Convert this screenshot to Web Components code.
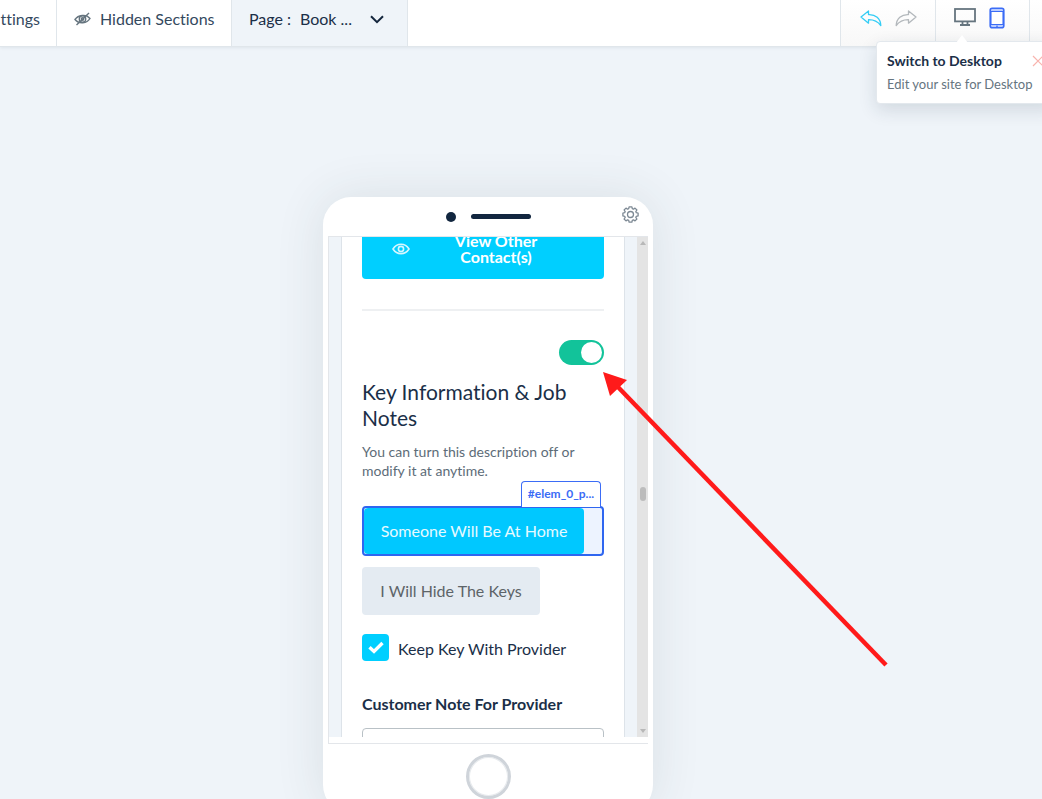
<!DOCTYPE html>
<html lang="en">
<head>
<meta charset="utf-8">
<title>Site editor</title>
<style>
  html, body { margin: 0; height: 100%; }
  body { font: 16px/20px Lato, "Open Sans", sans-serif; font-variant-ligatures: none; color: #1b2f48; background: #eff4f9; overflow: hidden; }
</style>
</head>
<body>
<site-editor></site-editor>

<template id="site-editor">
  <style>
    :host { display: flex; flex-direction: column; min-height: 100%; position: relative; }
    .stage { flex: 1; display: flex; justify-content: center; padding: 150px 66px 0 0; }
  </style>
  <tool-bar></tool-bar>
  <main class="stage">
    <phone-frame><booking-form></booking-form></phone-frame>
  </main>
  <callout-arrow></callout-arrow>
</template>

<template id="tool-bar">
  <style>
    :host { display: flex; height: 46px; background: #fff; border-bottom: 1px solid #e0e6eb; box-shadow: 0 1px 3px #1b2f4814; position: relative; z-index: 1; }
    nav, .tools { display: flex; }
    .tools { margin-left: auto; background: linear-gradient(#fff, #f8f8f8); }
    a, .page, .group { box-sizing: border-box; display: flex; align-items: center; padding-bottom: 8px; border-right: 1px solid #e0e6eb; white-space: nowrap; }
    a { color: #34495e; text-decoration: none; }
    .settings { width: 57px; justify-content: flex-end; padding-right: 16px; }
    .hidden { gap: 9px; width: 175px; padding-left: 17px; }
    .page { width: 176px; padding-left: 17px; background: #eff4f9; }
    .page label { width: 51px; }
    select { appearance: none; border: 0; background: none; font: inherit; color: inherit; padding: 0; margin: 0; width: 90px; }
    .page svg { margin-left: -20px; pointer-events: none; }
    button { border: 0; background: none; padding: 0; display: flex; }
    .group { border-right: 0; border-left: 1px solid #e0e6eb; }
    .history { width: 95px; gap: 13px; padding: 0 0 10px 19px; }
    .device { width: 94px; gap: 13px; padding: 0 0 10px 18px; position: relative; }
    .rest { width: 13px; }
    hint-popover { position: absolute; top: 41px; left: -60px; }
  </style>
  <nav>
    <a class="settings" href="#settings" aria-label="Settings">ttings</a>
    <a class="hidden" href="#hidden">
      <svg width="17" height="14" viewBox="0 0 17 14" fill="none" stroke="#66757f" stroke-width="1.400"><path d="M1 7.500C4 3 12 1.500 16 6.500C13 11.500 5 12.500 1 7.500Z"/><circle cx="8.500" cy="7" r="3.200"/><circle cx="8.500" cy="7" r="1.200"/><path d="M2.500 13L15 1"/></svg>
      Hidden Sections</a>
    <div class="page">
      <label for="page">Page :</label>
      <select id="page"><option>Book ...</option></select>
      <svg width="14" height="9" viewBox="0 0 14 9" fill="none" stroke="#14263d" stroke-width="2"><path d="M1 1.200L7 7.200L13 1.200"/></svg>
    </div>
  </nav>
  <div class="tools">
    <div class="group history">
      <button aria-label="Undo"><svg width="22" height="17" viewBox="0 0 22 17" fill="none" stroke="#35cdf5" stroke-width="1.300" stroke-linejoin="round"><path d="M1 7L8.500 1V4.600C15.500 4.200 20.500 8.500 20.800 15.500C17.500 11.200 14 9.600 8.500 9.700V13.200Z"/></svg></button>
      <button aria-label="Redo"><svg width="22" height="17" viewBox="0 0 22 17" fill="none" stroke="#b3b8bc" stroke-width="1.300" stroke-linejoin="round"><path d="M21 7L13.500 1V4.600C6.500 4.200 1.500 8.500 1.200 15.500C4.500 11.200 8 9.600 13.500 9.700V13.200Z"/></svg></button>
    </div>
    <div class="group device">
      <button aria-label="Desktop"><svg width="22" height="20" viewBox="0 0 22 20" fill="none" stroke="#66757f" stroke-width="1.800"><rect x="1" y="1" width="20" height="12.400"/><path d="M8.500 13.500V16.500M13.500 13.500V16.500M6 17H16"/></svg></button>
      <button aria-label="Mobile"><svg width="16" height="22" viewBox="0 0 16 22"><rect x="1.200" y="1.200" width="13.600" height="19.600" rx="2" fill="#b9ccff" stroke="#3b6cf6" stroke-width="1.600"/><path fill="#fff" stroke="#3b6cf6" stroke-width="1.100" d="M2 4.500H14V17.500H2Z"/><path d="M7 19.200H9" stroke="#3b6cf6"/></svg></button>
      <hint-popover><span slot="title">Switch to Desktop</span><span slot="text">Edit your site for Desktop</span></hint-popover>
    </div>
    <div class="group rest"></div>
  </div>
</template>

<template id="hint-popover">
  <style>
    :host { box-sizing: border-box; display: block; width: 180px; padding: 9px 10px 10px; background: #fff; border: 1px solid #e3e8ed; border-radius: 4px; box-shadow: 0 6px 18px #1b2f4824; white-space: nowrap; }
    header { display: flex; gap: 30px; align-items: center; font-size: 14px; font-weight: 700; line-height: 20px; }
    p { margin: 4px 0 0; font-size: 13px; line-height: 18px; color: #66757f; }
    .tip { position: absolute; top: -7px; left: 79px; }
    button { border: 0; background: none; padding: 0; display: flex; }
  </style>
  <svg class="tip" width="12" height="8" viewBox="0 0 12 8"><path d="M0 8L6 0L12 8Z" fill="#fff"/></svg>
  <header><slot name="title"></slot>
    <button aria-label="Close"><svg width="12" height="12" viewBox="0 0 12 12" stroke="#f8b4ae" stroke-width="1.200"><path d="M1 1L11 11M11 1L1 11"/></svg></button></header>
  <p><slot name="text"></slot></p>
</template>

<template id="phone-frame">
  <style>
    :host { box-sizing: border-box; display: flex; flex-direction: column; width: 330px; height: 616px; padding: 0 5px; background: #fff; border-radius: 28px; box-shadow: 0 0 50px #2a40401c; align-items: center; }
    header { align-self: stretch; display: grid; grid-template-columns: 1fr auto 1fr; align-items: center; height: 39px; }
    .speaker { grid-column: 2; display: flex; align-items: center; gap: 15px; }
    .camera { width: 10px; height: 10px; border-radius: 5px; background: #12263f; }
    .slot { width: 60px; height: 5px; border-radius: 3px; background: #12263f; }
    button { border: 0; background: none; padding: 0; display: flex; }
    .gear { justify-self: end; margin: 0 9px 4px 0; }
    .screen { box-sizing: border-box; align-self: stretch; height: 508px; border: 1px solid #e3e6ea; border-right: 0; padding-bottom: 6px; display: flex; }
    .view { flex: 1; background: #eff4f9; padding: 0 12px; overflow: hidden; }
    .scroll { width: 11px; background: #e4e4e4; display: flex; flex-direction: column; align-items: center; justify-content: space-between; padding: 4px 0; box-sizing: border-box; }
    .thumb { width: 6px; height: 14px; border-radius: 3px; background: #bcbcbc; margin-top: 14px; }
    .home { width: 45px; height: 45px; margin-top: 10px; border-radius: 50%; border: 3px solid #cfd4da; box-shadow: inset 0 0 0 1px #e8ebee; box-sizing: border-box; }
  </style>
  <header>
    <div class="speaker"><span class="camera"></span><span class="slot"></span></div>
    <button class="gear" aria-label="Device settings"><svg width="17" height="17" viewBox="0 0 17 17" fill="none" stroke="#7d8994" stroke-width="1.300" stroke-linejoin="round"><circle cx="8.500" cy="8.500" r="3"/><path d="M7.100 .9H9.900L10.300 2.700L11.400 3.200L13 2.100L14.900 4L13.800 5.600L14.300 6.700L16.100 7.100V9.900L14.300 10.300L13.800 11.400L14.900 13L13 14.900L11.400 13.800L10.300 14.300L9.900 16.100H7.100L6.700 14.300L5.600 13.800L4 14.900L2.100 13L3.200 11.400L2.700 10.300L.9 9.900V7.100L2.700 6.700L3.200 5.600L2.100 4L4 2.100L5.600 3.200L6.700 2.700Z"/></svg></button>
  </header>
  <div class="screen">
    <div class="view"><slot></slot></div>
    <div class="scroll">
      <svg width="6" height="4" viewBox="0 0 6 4"><path d="M0 4L3 0L6 4Z" fill="#b8b8b8"/></svg>
      <span class="thumb"></span>
      <svg width="6" height="4" viewBox="0 0 6 4"><path d="M0 0L3 4L6 0Z" fill="#b8b8b8"/></svg>
    </div>
  </div>
  <button class="home" aria-label="Home"></button>
</template>

<template id="booking-form">
  <style>
    :host { display: flow-root; background: #fff; border: solid #dde3e9; border-width: 0 1px; padding: 0 20px 20px; margin-top: -18px; }
    button { border: 0; font: inherit; border-radius: 4px; }
    .view { width: 100%; display: grid; grid-template-columns: 18px 1fr; align-items: center; gap: 26px; height: 60px; padding: 0 48px 0 30px; background: #00cfff; color: #fff; font-weight: 700; line-height: 16px; }
    hr { height: 2px; border: 0; margin: 30px 0 29px; background: #eef0f2; }
    toggle-switch { justify-content: flex-end; }
    h2 { margin: 14px 0 11px; font-size: 21px; line-height: 26px; font-weight: 400; }
    p { margin: 0 0 26px; font-size: 14px; line-height: 19px; color: #5d6c78; }
    .picked { position: relative; box-sizing: border-box; height: 50px; border: 2px solid #2f66f0; border-radius: 4px; background: #edf3ff; display: flex; }
    .picked button { width: 220px; background: #00c8ff; color: #e6faff; padding: 0; }
    .tag { position: absolute; right: 1px; bottom: 47px; box-sizing: border-box; width: 80px; height: 26px; border: 1px solid #3b6cf6; border-bottom: 0; border-radius: 4px 4px 0 0; background: #fff; color: #3b6cf6; font-size: 12px; font-weight: 700; line-height: 24px; text-align: center; }
    .other { display: block; width: 178px; height: 48px; margin: 11px 0 19px; padding: 0; background: #e4ebf2; color: #5d6468; }
    .note { display: block; font-weight: 700; margin: 33px 0 14px; }
    textarea { display: block; box-sizing: border-box; width: 100%; height: 60px; border: 1px solid #b9c1c6; border-radius: 4px; background: #fff; resize: none; }
  </style>
  <button class="view">
    <svg width="18" height="12" viewBox="0 0 18 12" fill="none" stroke="#d5f7ff" stroke-width="1.600"><path d="M1 6C5 -.3 13 -.3 17 6C13 12.300 5 12.300 1 6Z"/><circle cx="9" cy="6" r="2.600"/></svg>
    <span>View Other Contact(s)</span>
  </button>
  <hr>
  <toggle-switch></toggle-switch>
  <h2>Key Information &amp; Job Notes</h2>
  <p>You can turn this description off or modify it at anytime.</p>
  <div class="picked"><button>Someone Will Be At Home</button><span class="tag">#elem_0_p...</span></div>
  <button class="other">I Will Hide The Keys</button>
  <check-field>Keep Key With Provider</check-field>
  <label class="note" for="note">Customer Note For Provider</label>
  <textarea id="note"></textarea>
</template>

<template id="toggle-switch">
  <style>
    :host { display: flex; }
    input { appearance: none; box-sizing: border-box; width: 45px; height: 25px; margin: 0; padding: 2px; border-radius: 13px; background: #12c39a; display: flex; justify-content: flex-end; }
    input::before { content: ""; width: 21px; height: 21px; border-radius: 50%; background: #fff; }
  </style>
  <input type="checkbox" role="switch" aria-label="Show section" checked>
</template>

<template id="check-field">
  <style>
    :host { display: block; }
    label { display: flex; align-items: center; gap: 9px; }
    .box { display: grid; }
    .box > * { grid-area: 1 / 1; place-self: center; }
    input { appearance: none; width: 27px; height: 27px; margin: 0; border-radius: 4px; background: #00cfff; }
    svg { pointer-events: none; }
    .text { padding-top: 3px; }
  </style>
  <label><span class="box"><input type="checkbox" checked><svg width="16" height="13" viewBox="0 0 16 13" fill="none" stroke="#fff" stroke-width="3.400"><path d="M1.500 6.200L6 10.400L14.500 2"/></svg></span><span class="text"><slot></slot></span></label>
</template>

<template id="callout-arrow">
  <style>
    :host { position: absolute; left: 603px; top: 372px; z-index: 2; pointer-events: none; }
    svg { display: block; }
  </style>
  <svg width="286" height="296" viewBox="0 0 286 296"><path d="M14 14L283 293" stroke="#ff1a1a" stroke-width="4.500"/><path d="M0 0L24 8L7 24Z" fill="#ff1a1a"/></svg>
</template>

<script>
  for (const name of ["hint-popover", "toggle-switch", "check-field", "callout-arrow", "booking-form", "phone-frame", "tool-bar", "site-editor"]) {
    customElements.define(name, class extends HTMLElement {
      constructor() {
        super();
        this.attachShadow({ mode: "open" }).append(document.getElementById(name).content.cloneNode(true));
      }
    });
  }
</script>
</body>
</html>
